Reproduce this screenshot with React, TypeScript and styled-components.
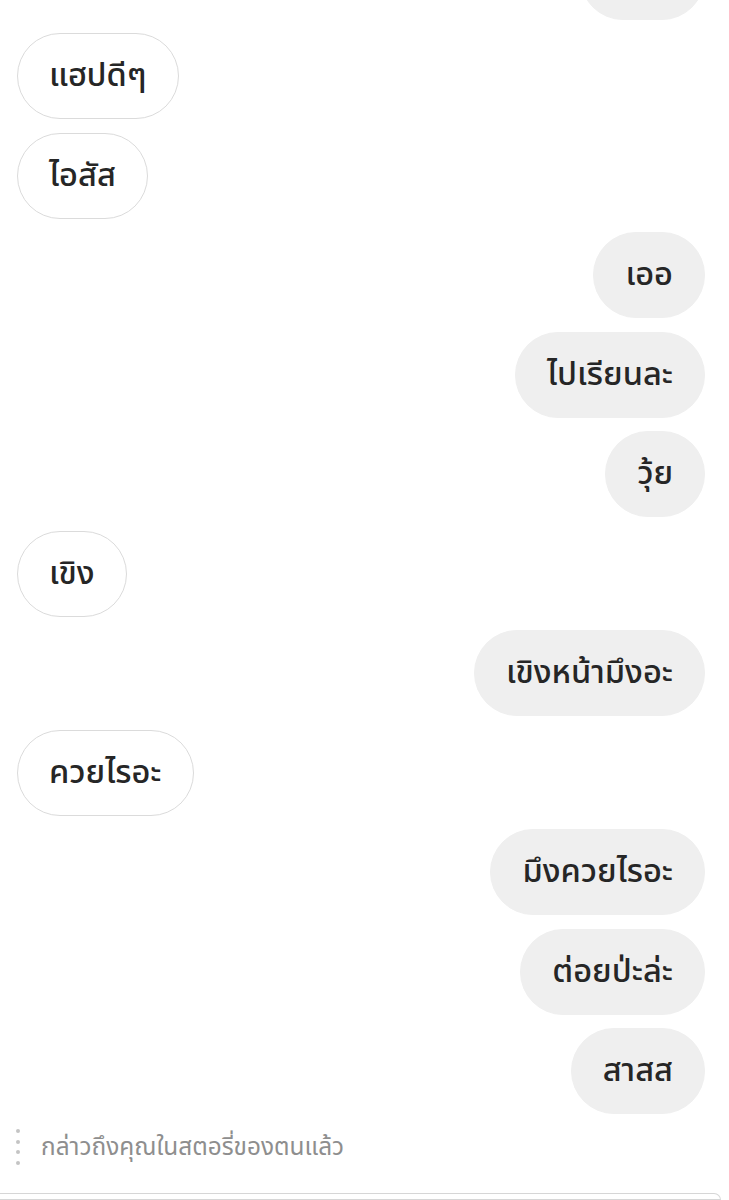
import React from "react";
import styled, { createGlobalStyle } from "styled-components";

const Global = createGlobalStyle`
  html, body { margin: 0; padding: 0; background: #fff; }
  body { font-family: "Noto Sans Thai", "Noto Sans", Roboto, "DejaVu Sans", sans-serif; overflow: hidden; }
`;

const Page = styled.div`
  width: 729px;
  height: 1200px;
  overflow: hidden;
  display: flex;
  flex-direction: column;
`;

const Thread = styled.div`
  margin-top: -66.5px;
  padding: 0 24px 0 17px;
  display: flex;
  flex-direction: column;
  gap: 13.5px;
`;

const Row = styled.div<{ $mine?: boolean }>`
  display: flex;
  justify-content: ${(p) => (p.$mine ? "flex-end" : "flex-start")};
`;

const Bubble = styled.div<{ $mine?: boolean }>`
  box-sizing: border-box;
  height: 86px;
  min-width: 86px;
  padding: 0 31px;
  border-radius: 43px;
  display: flex;
  align-items: center;
  justify-content: center;
  font-size: 32.6px;
  font-weight: 500;
  color: #262626;
  white-space: nowrap;
  background: ${(p) => (p.$mine ? "#efefef" : "#fff")};
  border: 1.5px solid ${(p) => (p.$mine ? "#efefef" : "#dbdbdb")};
`;

const Footer = styled.div`
  display: flex;
  align-items: center;
  gap: 21px;
  padding: 16px 0 0 16px;
  height: 34px;
`;

const Dots = styled.div`
  display: flex;
  flex-direction: column;
  gap: 6.5px;
`;

const Dot = styled.span`
  width: 4px;
  height: 4px;
  border-radius: 50%;
  background: #c4c4c4;
`;

const Mention = styled.div`
  font-size: 24.4px;
  color: #8e8e8e;
`;

const Composer = styled.div`
  margin: 29px 8px 0 0;
  height: 60px;
  border: 1.5px solid #d6d6d6;
  border-left: none;
  border-radius: 0 30px 0 0;
`;

const messages: { text: string; mine?: boolean }[] = [
  { text: "", mine: true },
  { text: "แฮปดีๆ" },
  { text: "ไอสัส" },
  { text: "เออ", mine: true },
  { text: "ไปเรียนละ", mine: true },
  { text: "วุ้ย", mine: true },
  { text: "เขิง" },
  { text: "เขิงหน้ามึงอะ", mine: true },
  { text: "ควยไรอะ" },
  { text: "มึงควยไรอะ", mine: true },
  { text: "ต่อยป่ะล่ะ", mine: true },
  { text: "สาสส", mine: true },
];

export default function App() {
  return (
    <Page>
      <Global />
      <Thread>
        {messages.map((m, i) => (
          <Row key={i} $mine={m.mine}>
            <Bubble $mine={m.mine} style={i === 0 ? { width: 125 } : undefined}>
              {m.text}
            </Bubble>
          </Row>
        ))}
      </Thread>
      <Footer>
        <Dots>
          <Dot />
          <Dot />
          <Dot />
          <Dot />
        </Dots>
        <Mention>กล่าวถึงคุณในสตอรี่ของตนแล้ว</Mention>
      </Footer>
      <Composer />
    </Page>
  );
}
